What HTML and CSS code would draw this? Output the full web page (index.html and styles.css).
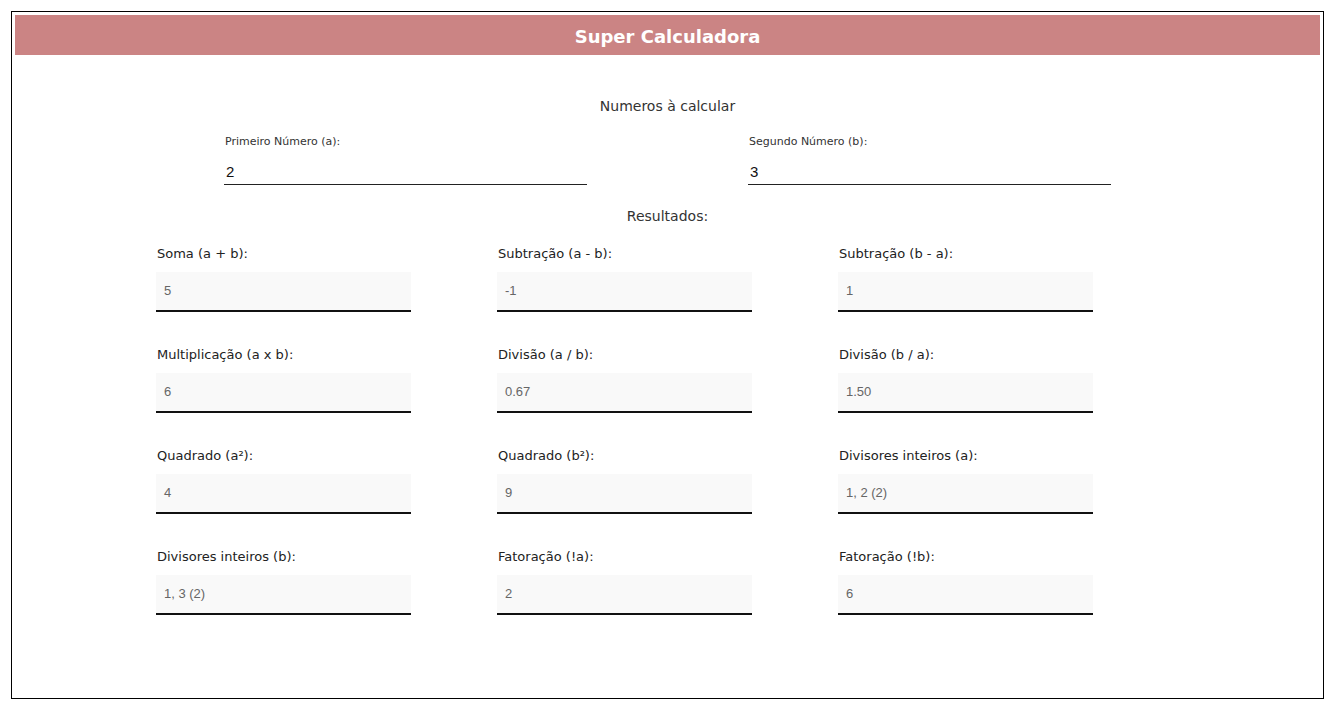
FILE: index.html
```html
<!DOCTYPE html>
<html lang="pt-BR">
<head>
<meta charset="utf-8">
<title>Super Calculadora</title>
<link rel="stylesheet" href="styles.css">
</head>
<body>
<div class="frame">
  <header class="header">Super Calculadora</header>
  <div class="section-title first">Numeros à calcular</div>
  <div class="inputs">
    <div class="input-col">
      <label class="input-label">Primeiro Número (a):</label>
      <input class="num-input" type="text" value="2">
    </div>
    <div class="input-col">
      <label class="input-label">Segundo Número (b):</label>
      <input class="num-input" type="text" value="3">
    </div>
  </div>
  <div class="section-title second">Resultados:</div>
  <div class="results">
    <div class="field"><div class="field-label">Soma (a + b):</div><div class="field-box">5</div></div>
    <div class="field"><div class="field-label">Subtração (a - b):</div><div class="field-box">-1</div></div>
    <div class="field"><div class="field-label">Subtração (b - a):</div><div class="field-box">1</div></div>
    <div class="field"><div class="field-label">Multiplicação (a x b):</div><div class="field-box">6</div></div>
    <div class="field"><div class="field-label">Divisão (a / b):</div><div class="field-box">0.67</div></div>
    <div class="field"><div class="field-label">Divisão (b / a):</div><div class="field-box">1.50</div></div>
    <div class="field"><div class="field-label">Quadrado (a²):</div><div class="field-box">4</div></div>
    <div class="field"><div class="field-label">Quadrado (b²):</div><div class="field-box">9</div></div>
    <div class="field"><div class="field-label">Divisores inteiros (a):</div><div class="field-box">1, 2 (2)</div></div>
    <div class="field"><div class="field-label">Divisores inteiros (b):</div><div class="field-box">1, 3 (2)</div></div>
    <div class="field"><div class="field-label">Fatoração (!a):</div><div class="field-box">2</div></div>
    <div class="field"><div class="field-label">Fatoração (!b):</div><div class="field-box">6</div></div>
  </div>
</div>
</body>
</html>
```
FILE: styles.css
```css
* { box-sizing: border-box; }
html, body { margin: 0; padding: 0; background: #fff; }
body {
  font-family: "Century Gothic", "DejaVu Sans", sans-serif;
  color: #333;
}
.frame {
  margin: 11px 12px 0 11px;
  height: 688px;
  border: 1px solid #000;
  padding: 3px;
}
.header {
  height: 40px;
  padding-top: 3px;
  line-height: 37px;
  background: #cb8484;
  color: #fff;
  text-align: center;
  font-weight: bold;
  font-size: 18px;
}
.section-title {
  text-align: center;
  font-size: 14px;
  line-height: 20px;
  color: #333;
}
.section-title.first { margin-top: 41px; }
.section-title.second { margin-top: 21px; }
.inputs {
  display: flex;
  justify-content: center;
  margin-top: 19px;
}
.input-col {
  width: 524px;
  display: flex;
  flex-direction: column;
  align-items: center;
}
.input-label {
  width: 363px;
  font-size: 11px;
  line-height: 14px;
  padding-left: 1px;
  color: #333;
}
.num-input {
  width: 363px;
  height: 30px;
  margin-top: 6px;
  padding: 4px 0 0 2px;
  border: none;
  border-bottom: 1px solid #222;
  font-family: "Liberation Sans", Arial, sans-serif;
  font-size: 15px;
  color: #111;
  background: transparent;
  outline: none;
}
.results {
  display: grid;
  grid-template-columns: repeat(3, 341px);
  justify-content: center;
  row-gap: 35px;
  margin-top: 20px;
}
.field { width: 255px; }
.field-label {
  font-size: 13px;
  line-height: 15px;
  padding-left: 1px;
  color: #222;
}
.field-box {
  margin-top: 11px;
  height: 40px;
  line-height: 38px;
  padding-left: 8px;
  background: #f9f9f9;
  border-bottom: 2px solid #111;
  font-family: "Liberation Sans", Arial, sans-serif;
  font-size: 13px;
  color: #666;
}
```
